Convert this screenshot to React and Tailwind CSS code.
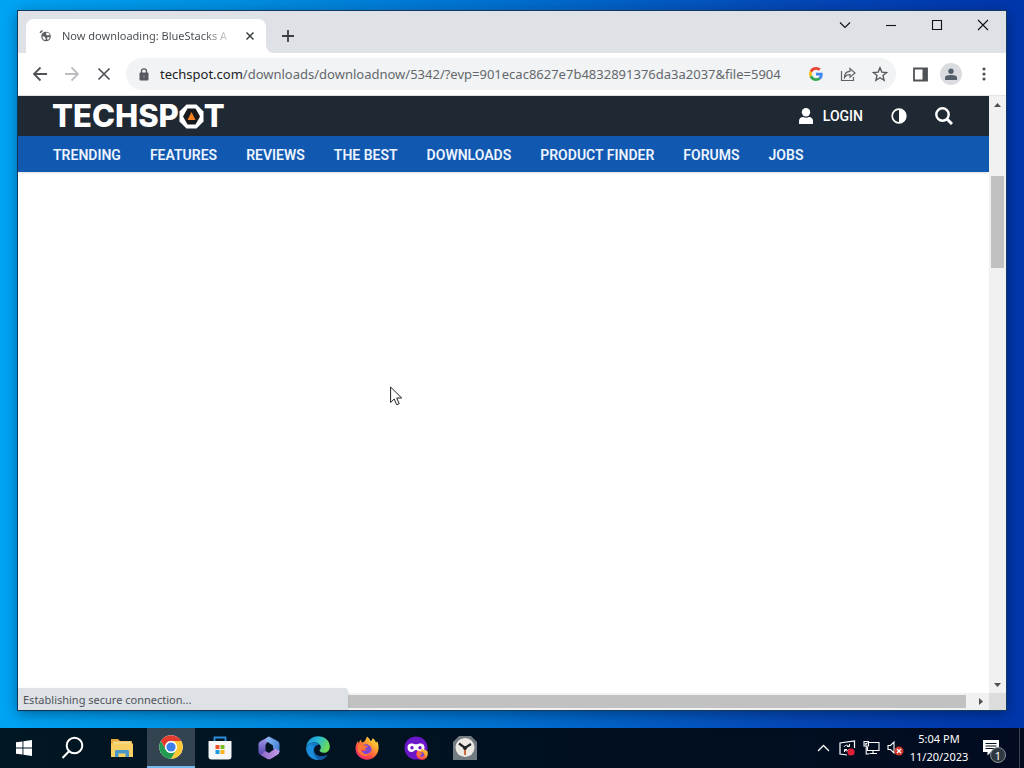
import React from 'react';

const navItems = ['TRENDING', 'FEATURES', 'REVIEWS', 'THE BEST', 'DOWNLOADS', 'PRODUCT FINDER', 'FORUMS', 'JOBS'];

/* ---------- Browser chrome ---------- */

function Favicon() {
  return (
    <svg className="h-4 w-4 shrink-0" viewBox="0 0 16 16" aria-hidden="true">
      <circle cx="8" cy="8.500" r="4.800" fill="#5b6064" />
      <path d="M4.500 8.500c1-.5 2 0 2.500 1s1 1 .5 2.500C5.500 12 4.200 10.500 4.500 8.500zM8 5c1.500-.5 3 .3 3.800 1.500L10 7.500 8.500 7zM9 9.500l2.500-.5c0 1.500-.8 2.500-2 3z" fill="#fff" />
      <path d="M2.200 5A3.500 3.500 0 0 1 4.500 2.700" fill="none" stroke="#5f6368" strokeWidth="1.500" />
    </svg>
  );
}

function WindowButtons() {
  const stroke = { fill: 'none', stroke: '#111', strokeWidth: 1.1 };
  return (
    <div className="flex h-7">
      <button aria-label="Search tabs" className="flex w-[46px] items-center justify-center">
        <svg width="12" height="12" viewBox="0 0 12 12"><path d="M1 3.500 6 8.500l5-5" {...stroke} /></svg>
      </button>
      <button aria-label="Minimize" className="flex w-[46px] items-center justify-center">
        <svg width="12" height="12" viewBox="0 0 12 12"><path d="M1 6.500h10" {...stroke} /></svg>
      </button>
      <button aria-label="Maximize" className="flex w-[46px] items-center justify-center">
        <svg width="12" height="12" viewBox="0 0 12 12"><path d="M1.500 1.500h9v9h-9z" {...stroke} /></svg>
      </button>
      <button aria-label="Close" className="flex w-[46px] items-center justify-center">
        <svg width="12" height="12" viewBox="0 0 12 12"><path d="m1 1 10 10M11 1 1 11" {...stroke} /></svg>
      </button>
    </div>
  );
}

function TabStrip() {
  return (
    <div className="flex h-[42px] shrink-0 justify-between bg-[#dee1e6]">
      <div className="flex items-end pl-2">
        <div className="flex h-[34px] w-60 items-center justify-between rounded-t-lg bg-white pr-2 pl-3">
          <Favicon />
          <span className="ml-2 flex-1 text-[11px] whitespace-nowrap">
            <span className="bg-gradient-to-r from-[#45494d] from-85% to-[#d5d6d8] bg-clip-text text-transparent">
              Now downloading: BlueStacks A
            </span>
          </span>
          <button aria-label="Close tab" className="flex h-4 w-4 items-center justify-center">
            <svg width="10" height="10" viewBox="0 0 10 10"><path d="m1.500 1.500 7 7m0-7-7 7" stroke="#3c4043" strokeWidth="1.500" /></svg>
          </button>
        </div>
        <svg className="h-2 w-2" viewBox="0 0 8 8" aria-hidden="true"><path d="M0 0v8h8a8 8 0 0 1-8-8" fill="#fff" /></svg>
        <button aria-label="New tab" className="flex h-[34px] w-7 items-center justify-center">
          <svg width="14" height="14" viewBox="0 0 14 14"><path d="M7 1v12M1 7h12" stroke="#3c4043" strokeWidth="1.800" /></svg>
        </button>
      </div>
      <WindowButtons />
    </div>
  );
}

function GoogleLogo() {
  return (
    <svg width="14" height="14" viewBox="0 0 48 48" aria-hidden="true">
      <path fill="#EA4335" d="M24 9.500c3.540 0 6.710 1.220 9.210 3.600l6.850-6.850C35.900 2.380 30.470 0 24 0 14.620 0 6.510 5.380 2.560 13.220l7.980 6.190C12.430 13.720 17.740 9.500 24 9.500z" />
      <path fill="#4285F4" d="M46.980 24.550c0-1.570-.15-3.090-.38-4.550H24v9.020h12.940c-.58 2.960-2.260 5.480-4.780 7.180l7.730 6c4.510-4.180 7.090-10.360 7.090-17.650z" />
      <path fill="#FBBC05" d="M10.530 28.590c-.48-1.450-.76-2.990-.76-4.590s.27-3.140.76-4.590l-7.980-6.190C.92 16.460 0 20.120 0 24s.92 7.540 2.560 10.780l7.970-6.190z" />
      <path fill="#34A853" d="M24 48c6.480 0 11.930-2.130 15.890-5.810l-7.730-6c-2.150 1.450-4.920 2.300-8.160 2.300-6.260 0-11.570-4.220-13.470-9.910l-7.980 6.190C6.510 42.620 14.620 48 24 48z" />
    </svg>
  );
}

function Toolbar() {
  return (
    <div className="flex h-[43px] shrink-0 items-center border-b border-[#e3e5e8] bg-white pr-1.5">
      <div className="flex w-[108px] pl-1.5">
        <button aria-label="Back" className="flex h-8 w-8 items-center justify-center">
          <svg width="16" height="16" viewBox="0 0 16 16"><path d="M15 8H2m6.500-6.500L2 8l6.500 6.500" fill="none" stroke="#4f5357" strokeWidth="1.800" /></svg>
        </button>
        <button aria-label="Forward" className="flex h-8 w-8 items-center justify-center">
          <svg width="16" height="16" viewBox="0 0 16 16"><path d="M1 8h13M7.500 1.500 14 8l-6.500 6.500" fill="none" stroke="#bcbec1" strokeWidth="1.800" /></svg>
        </button>
        <button aria-label="Stop loading" className="flex h-8 w-8 items-center justify-center">
          <svg width="14" height="14" viewBox="0 0 14 14"><path d="m1.500 1.500 11 11m0-11-11 11" stroke="#4f5357" strokeWidth="1.700" /></svg>
        </button>
      </div>

      <div className="flex h-8 min-w-0 flex-1 items-center rounded-full bg-[#f1f3f4] pl-3">
        <svg className="shrink-0" width="12" height="13" viewBox="0 0 12 13" aria-hidden="true">
          <rect x="1.500" y="4.500" width="9" height="8" rx="1" fill="#55595e" />
          <path d="M3.500 5V3.300a2.500 2.500 0 0 1 5 0V5" fill="none" stroke="#55595e" strokeWidth="1.300" />
          <circle cx="6" cy="8.500" r="1" fill="#85888c" />
        </svg>
        <div className="ml-2.5 min-w-0 flex-1 pt-0.5 text-[13px] whitespace-nowrap text-[#64686d]">
          <span className="text-[#202124]">techspot.com</span>/downloads/downloadnow/5342/?evp=901ecac8627e7b4832891376da3a2037&amp;file=5904
        </div>
        <button aria-label="Search with Google" className="flex h-8 w-8 shrink-0 items-center justify-center"><GoogleLogo /></button>
        <button aria-label="Share this page" className="flex h-8 w-8 shrink-0 items-center justify-center">
          <svg width="16" height="16" viewBox="0 0 16 16" fill="none" stroke="#5f6368" strokeWidth="1.200">
            <path d="M1.500 5v9.500h12V11" />
            <path d="M4.500 11.500c0-4 2-6 5.500-6.200V2.500l5 4.500-5 4.300V8.500c-2.500 0-4.200.8-5.500 3z" />
          </svg>
        </button>
        <button aria-label="Bookmark this tab" className="flex h-8 w-8 shrink-0 items-center justify-center">
          <svg width="16" height="16" viewBox="0 0 24 24" fill="none" stroke="#54585c" strokeWidth="2"><path d="m12 2.500 2.800 6.600 7.200.6-5.500 4.700 1.700 7-6.200-3.700-6.200 3.700 1.700-7L2 9.700l7.200-.6z" /></svg>
        </button>
      </div>

      <div className="flex items-center pl-1">
        <button aria-label="Side panel" className="flex h-8 w-8 items-center justify-center pl-2">
          <svg width="15" height="15" viewBox="0 0 15 15"><path d="M1 1.500h13v12H1z" fill="none" stroke="#4f5357" strokeWidth="1.800" /><path d="M9.500 1.500H14v12H9.500z" fill="#4f5357" /></svg>
        </button>
        <button aria-label="Profile" className="ml-2 flex h-[22px] w-[22px] items-center justify-center rounded-full bg-[#dadce0]">
          <svg width="12" height="12" viewBox="0 0 12 12" fill="#54606c"><circle cx="6" cy="3.200" r="2.700" /><path d="M0 12V9.500C0 7.700 3 7 6 7s6 .7 6 2.500V12z" /></svg>
        </button>
        <button aria-label="Menu" className="ml-1.5 flex h-8 w-8 items-center justify-center">
          <svg width="4" height="14" viewBox="0 0 4 14" fill="#4f5357"><circle cx="2" cy="2" r="1.600" /><circle cx="2" cy="7" r="1.600" /><circle cx="2" cy="12" r="1.600" /></svg>
        </button>
      </div>
    </div>
  );
}

/* ---------- Page ---------- */

function SiteHeader() {
  return (
    <header className="font-[Roboto,sans-serif] text-white shadow-sm">
      <div className="flex h-10 items-center justify-between bg-[#1f2933] pr-9 pl-[34px]">
        <a href="#" aria-label="TechSpot" className="flex items-center font-[Inter,sans-serif] text-[31px] leading-8 font-extrabold">
          TECHSP
          <svg className="h-[25px] w-[25px]" viewBox="0 0 25 25" aria-hidden="true">
            <path d="M7.500.5h10l7 7v10l-7 7h-10l-7-7v-10z" fill="#fff" />
            <path d="M8.500 4.500h8l4.500 8-4.500 8h-8l-4.500-8z" fill="#17191c" />
            <path d="m12.500 8 4 8h-8z" fill="#f58220" />
          </svg>
          T
        </a>
        <div className="flex items-center">
          <a href="#" className="flex items-center gap-2.5 text-sm font-medium">
            <svg width="14" height="16" viewBox="0 0 14 16" fill="#fff" aria-hidden="true"><circle cx="7" cy="4.200" r="4.200" /><path d="M0 16v-3c0-2.500 2-4 4-4 2 1 4 1 6 0 2 0 4 1.500 4 4v3z" /></svg>
            LOGIN
          </a>
          <button aria-label="Toggle dark mode" className="ml-7">
            <svg width="16" height="16" viewBox="0 0 16 16"><circle cx="8" cy="8" r="6.800" fill="none" stroke="#fff" strokeWidth="1.700" /><path d="M8 1a7 7 0 0 1 0 14z" fill="#fff" /></svg>
          </button>
          <button aria-label="Search" className="ml-7">
            <svg width="18" height="18" viewBox="0 0 18 18" fill="none" stroke="#fff"><circle cx="7.500" cy="7.500" r="6.200" strokeWidth="2.400" /><path d="m12 12 5 5" strokeWidth="3" /></svg>
          </button>
        </div>
      </div>
      <nav className="flex h-9 items-center gap-[29px] bg-[#1159b0] pt-0.5 pl-[35px] text-sm font-semibold whitespace-nowrap text-[#edf4ff]">
        {navItems.map((item) => (
          <a key={item} href="#">{item}</a>
        ))}
      </nav>
    </header>
  );
}

function VerticalScrollbar() {
  return (
    <div className="flex w-[17px] shrink-0 flex-col items-center bg-[#f1f1f1]">
      <button aria-label="Scroll up" className="flex h-[17px] w-full items-center justify-center">
        <svg width="7" height="4" viewBox="0 0 7 4"><path d="M0 4h7L3.500 0z" fill="#505050" /></svg>
      </button>
      <div className="mt-[63px] h-[92px] w-[13px] bg-[#c1c1c1]" />
      <button aria-label="Scroll down" className="mt-auto flex h-[17px] w-full items-center justify-center">
        <svg width="7" height="4" viewBox="0 0 7 4"><path d="M0 0h7L3.500 4z" fill="#505050" /></svg>
      </button>
    </div>
  );
}

function BrowserWindow() {
  return (
    <main className="relative flex min-w-0 flex-1 flex-col bg-white shadow-[0_0_0_1px_#123a60,0_3px_14px_rgba(0,0,0,0.4)]">
      <TabStrip />
      <Toolbar />
      <div className="flex flex-1">
        <div className="min-w-0 flex-1 bg-white">
          <SiteHeader />
        </div>
        <VerticalScrollbar />
      </div>
      <div className="flex h-[17px] shrink-0 items-center bg-[#f1f1f1]">
        <div className="ml-[17px] h-[13px] flex-1 bg-[#c1c1c1]" />
        <button aria-label="Scroll right" className="ml-[6px] flex h-[17px] w-[17px] items-center justify-center">
          <svg width="4" height="7" viewBox="0 0 4 7"><path d="M0 0v7l4-3.500z" fill="#505050" /></svg>
        </button>
        <div className="h-full w-[17px] bg-[#dcdcdc]" />
      </div>
      <div className="absolute bottom-0 left-0 flex h-[22px] w-[330px] items-center rounded-tr bg-[#dee1e6] pt-0.5 pl-[5px] text-[11px] text-[#50545a] shadow-sm">
        Establishing secure connection...
      </div>
    </main>
  );
}

/* ---------- Taskbar ---------- */

function StartIcon() {
  return (
    <svg width="16" height="16" viewBox="0 0 16 16" fill="#fff">
      <path d="M0 2.300 6.500 1.400v6.200H0zM7.400 1.200 16 0v7.600H7.400zM0 8.400h6.500v6.200L0 13.700zM7.400 8.400H16V16l-8.600-1.200z" />
    </svg>
  );
}

function SearchIcon() {
  return (
    <svg width="24" height="24" viewBox="0 0 24 24" fill="none" stroke="#fff" strokeWidth="2">
      <circle cx="13.500" cy="9.500" r="7.800" />
      <path d="M8 15.200 1.500 22" />
    </svg>
  );
}

function FolderIcon() {
  return (
    <svg width="24" height="24" viewBox="0 0 24 24">
      <path d="M1 3h7l2 2h12v4H1z" fill="#e5a93a" />
      <path d="M3 5.500h18V9H3z" fill="#f6dc91" />
      <path d="M1 7.500h22V21H1z" fill="#f8cf63" />
      <path d="M5 21v-5.500c0-1 .8-1.500 1.500-1.500h11c.8 0 1.500.6 1.500 1.500V21h-3.500v-3.500h-7V21z" fill="#4a95ca" />
    </svg>
  );
}

function ChromeIcon() {
  return (
    <svg width="24" height="24" viewBox="0 0 24 24">
      <circle cx="12" cy="12" r="11.800" fill="#fff" />
      <path d="M1.800 6.100A11.800 11.800 0 0 1 22.200 6.100H12a5.900 5.900 0 0 0-5.110 8.850z" fill="#e33b2e" />
      <path d="M22.200 6.100A11.800 11.800 0 0 1 12 23.800l5.110-8.850A5.900 5.900 0 0 0 12 6.100z" fill="#fcc934" />
      <path d="M12 23.800A11.800 11.800 0 0 1 1.800 6.100l5.090 8.850A5.900 5.900 0 0 0 17.110 14.950z" fill="#229a50" />
      <circle cx="12" cy="12" r="5.900" fill="#fff" />
      <circle cx="12" cy="12" r="4.600" fill="#3c7fe8" />
    </svg>
  );
}

function StoreIcon() {
  return (
    <svg width="24" height="24" viewBox="0 0 24 24">
      <path d="M6.500 5V1.500h11V5" fill="none" stroke="#2f8ddd" strokeWidth="1.800" />
      <path d="M.5 5h23v15.500a3 3 0 0 1-3 3h-17a3 3 0 0 1-3-3z" fill="#f5f6f7" />
      <path d="M7.500 9h4v4h-4z" fill="#f0522a" />
      <path d="M12.500 9h4v4h-4z" fill="#7eb928" />
      <path d="M7.500 14h4v4h-4z" fill="#1f9bdd" />
      <path d="M12.500 14h4v4h-4z" fill="#f7b51c" />
    </svg>
  );
}

function OfficeIcon() {
  return (
    <svg width="24" height="24" viewBox="0 0 24 24">
      <defs>
        <linearGradient id="officeA" x1="0" y1="0" x2="0" y2="1"><stop stopColor="#a9a1ee" /><stop offset="1" stopColor="#5745af" /></linearGradient>
        <linearGradient id="officeB" x1="0" y1="0" x2="1" y2="0.500"><stop stopColor="#8fc0f5" /><stop offset="1" stopColor="#4b85d6" /></linearGradient>
        <linearGradient id="officeC" x1="0" y1="0" x2="1" y2="0"><stop stopColor="#8a67c9" /><stop offset="1" stopColor="#c79ae6" /></linearGradient>
      </defs>
      <path d="M12 .5 3.500 5.200C2 6 1.500 7 1.500 8.500v7.500c0 1.500.8 2.500 2 3L8.500 16V9.500c0-1 .5-2 1.500-2.500z" fill="url(#officeA)" />
      <path d="M12 .5 20.500 5c1.500 1 2 2 2 3.500V16L16 12.500V9.500L9 5c0-2 1-3.500 3-4.500z" fill="url(#officeB)" />
      <path d="M3.500 19 10 22.700c1.300.8 2.700.8 4 0l6.500-4c1.500-1 2-2.200 2-3.700L18 12.500 12 17l-3.500-2z" fill="url(#officeC)" />
    </svg>
  );
}

function EdgeIcon() {
  return (
    <svg width="24" height="24" viewBox="0 0 24 24">
      <defs>
        <linearGradient id="edgeTop" x1="0" y1="0" x2="1" y2="0.400"><stop stopColor="#168cd9" /><stop offset="0.500" stopColor="#27b8d5" /><stop offset="1" stopColor="#6bdc58" /></linearGradient>
        <linearGradient id="edgeLow" x1="0" y1="0" x2="1" y2="1"><stop stopColor="#1689d8" /><stop offset="1" stopColor="#104b91" /></linearGradient>
      </defs>
      <path d="M.3 12C.3 5 5.500.2 12 .2 19 .2 23.800 5 23.800 10.500c0 4-2.600 6.300-6 6.300-2.500 0-4.300-1.100-4.300-2.300 0-.8 1.300-1 1.300-2.800C14.800 8.500 12 6.500 8 6.500 4 6.500.8 8.800.3 12z" fill="url(#edgeTop)" />
      <path d="M.3 12C.8 8.800 4 6.500 8 6.500c2.500 0 4.500.8 5.800 2C10.500 8.500 8 11 8 14c0 5 5.500 7.800 12.500 5.200.7-.2 1 .3.600.8A11.800 11.800 0 0 1 .3 12z" fill="url(#edgeLow)" />
      <path d="M8 10.500C6 14 7 20 12.500 23.700 6 24 .3 19 .3 12 1.500 8.500 6 8 8 10.500z" fill="#1c8ddb" />
    </svg>
  );
}

function FirefoxIcon({ size = 24, id = 'fox' }) {
  return (
    <svg width={size} height={size} viewBox="0 0 24 24">
      <defs>
        <linearGradient id={id} x1="1" y1="0" x2="0.200" y2="1"><stop stopColor="#fff04a" /><stop offset="0.350" stopColor="#ffab30" /><stop offset="0.700" stopColor="#ff4b42" /><stop offset="1" stopColor="#f0287b" /></linearGradient>
      </defs>
      <path d="M12 .5c2 1.500 3 3 3.500 4.500 1.500-.5 2-1.500 2-3 3 2 3 4 3.500 4.500.8-.3 1-1 1-1.500 1.200 2 1.800 4.700 1.500 8C23 19 18 23.700 12 23.700S.5 19 .5 12.500c0-3 1-5.500 2.500-7.500 0 1 .2 1.500.6 2C4.500 5.500 5 4.500 6 3.800c0 1.200.5 2.200 1.500 2.700C10 6 10.500 3.500 12 .5z" fill={`url(#${id})`} />
      <path d="M8 9c3-2 8.500 0 8.500 4.500 0 3-2.500 5-5 5s-5-2-5-4.500c1.500 1.300 3.500 1.200 5-.5-2-.3-3.500-1-5-2.500.3-.8.800-1.500 1.500-2z" fill="#8048cf" />
      <path d="M3 9c2-2 5-1 7 .5l3 1-3 2c-1 1.300-3 1.300-4 .5 0 3 3 5.500 6 5 2-.3 3.500-1.500 4-3 .5 5-8 7-12 2C2.500 15 2 12 3 9z" fill="#ff7735" />
    </svg>
  );
}

function PrivateBrowsingIcon() {
  return (
    <div className="relative h-6 w-6">
      <svg width="24" height="24" viewBox="0 0 24 24">
        <circle cx="12" cy="12" r="11.500" fill="#6a16c9" />
        <path d="M3.500 11.500C3.500 9 5 7.500 7.500 7.500c2 0 3.200.8 4.500.8s2.500-.8 4.500-.8c2.500 0 4 1.500 4 4s-1.500 4.500-4 4.500c-2.300 0-3-2-4.500-2s-2.200 2-4.500 2c-2.500 0-4-2-4-4.500z" fill="#fff" />
        <circle cx="8" cy="11.700" r="1.700" fill="#6a16c9" />
        <circle cx="16" cy="11.700" r="1.700" fill="#6a16c9" />
      </svg>
      <span className="absolute right-0 bottom-0"><FirefoxIcon size={12} id="foxSmall" /></span>
    </div>
  );
}

function ClockIcon() {
  return (
    <svg width="24" height="24" viewBox="0 0 24 24">
      <path d="M0 24V6l6-6h12l6 6v18z" fill="#747c83" />
      <circle cx="12" cy="11.500" r="9.500" fill="#ece9e3" />
      <path d="M12 12v7" stroke="#d06b40" strokeWidth="2" />
      <path d="M6 7.500 12 12l6-4" fill="none" stroke="#202224" strokeWidth="2.200" />
      <circle cx="12" cy="12" r="2" fill="#202224" />
    </svg>
  );
}

const apps = [
  { name: 'Start', Icon: StartIcon },
  { name: 'Search', Icon: SearchIcon },
  { name: 'File Explorer', Icon: FolderIcon },
  { name: 'Google Chrome', Icon: ChromeIcon, active: true },
  { name: 'Microsoft Store', Icon: StoreIcon },
  { name: 'Microsoft 365', Icon: OfficeIcon },
  { name: 'Microsoft Edge', Icon: EdgeIcon },
  { name: 'Firefox', Icon: FirefoxIcon },
  { name: 'Private Browsing', Icon: PrivateBrowsingIcon },
  { name: 'Clock', Icon: ClockIcon },
];

function Tray() {
  return (
    <div className="flex items-center text-white">
      <button aria-label="Show hidden icons" className="flex w-6 justify-center">
        <svg width="13" height="8" viewBox="0 0 13 8"><path d="m1 7 5.500-5.500L12 7" fill="none" stroke="#fff" strokeWidth="1.300" /></svg>
      </button>
      <button aria-label="Updates" className="flex w-6 justify-center">
        <svg width="17" height="16" viewBox="0 0 17 16" fill="none" stroke="#fff" strokeWidth="1.200">
          <path d="M15.500 8V1L1 3v11l7 1" />
          <path d="M5 7c.8-2 4-2.500 5-.5M10.500 4v2.500H8M5.500 12V9.500H8M9.500 9.500c-.5 1.500-2.500 2-3.800.5" strokeWidth="1" />
          <circle cx="12" cy="12" r="3.600" fill="#e01e37" stroke="none" />
        </svg>
      </button>
      <button aria-label="Network" className="flex w-6 justify-center">
        <svg width="17" height="16" viewBox="0 0 17 16" fill="none" stroke="#fff" strokeWidth="1.100">
          <path d="M5.500 2.500H16v8H4.500V7M10 10.500v3M6.500 13.500H14M1 1.500h4.500V6H1zM3.200 6v8H6M2 3.500l1 1 1.500-2" />
        </svg>
      </button>
      <button aria-label="Volume muted" className="flex w-6 justify-center">
        <svg width="17" height="16" viewBox="0 0 17 16" fill="none" stroke="#fff">
          <path d="M1 5.500h2.500L7 2v11L3.500 9.500H1z" strokeWidth="1.100" />
          <circle cx="12" cy="11" r="4.500" fill="#d3352b" stroke="none" />
          <path d="m10 9 4 4m0-4-4 4" strokeWidth="1.300" />
        </svg>
      </button>
      <button className="w-16 text-center text-[11px] leading-[18px] whitespace-nowrap">
        5:04 PM<br />11/20/2023
      </button>
      <button aria-label="Notifications" className="relative flex h-10 w-12 items-center pl-3">
        <svg width="16" height="16" viewBox="0 0 16 16"><path d="M0 0h16v12H8l-3.500 3.500V12H0z" fill="#fff" /><path d="M2.500 3.500h11M2.500 6h11M2.500 8.500h11" stroke="#081320" /></svg>
        <span className="absolute top-[19px] left-[19px] flex h-4 w-4 items-center justify-center rounded-full border border-[#8a9299] bg-[#303941] text-[11px] leading-none">1</span>
      </button>
      <span className="mr-1 h-10 w-px bg-[#3b4450]" />
    </div>
  );
}

function Taskbar() {
  return (
    <footer className="flex h-10 shrink-0 justify-between bg-gradient-to-r from-[#011722] to-[#020b20]">
      <div className="flex gap-px">
        {apps.map(({ name, Icon, active }) => (
          <button
            key={name}
            aria-label={name}
            className={active ? 'flex w-12 items-center justify-center border-b-2 border-[#76b9ed] bg-[#334450]' : 'flex w-12 items-center justify-center'}
          >
            <Icon />
          </button>
        ))}
      </div>
      <Tray />
    </footer>
  );
}

export default function App() {
  return (
    <div className="relative flex h-screen flex-col overflow-hidden bg-[linear-gradient(90deg,#00a4f5_0%,#0092e4_20%,#0072d2_48%,#0547b8_78%,#0036ac_100%)] font-['Noto_Sans','Open_Sans',sans-serif]">
      <div className="flex flex-1 px-[18px] pt-[11px] pb-[18px]">
        <BrowserWindow />
      </div>
      <Taskbar />
      <svg className="absolute top-[386px] left-[390px]" width="13" height="20" viewBox="0 0 13 20" aria-hidden="true">
        <path d="M.6 1v15.500L4.200 13l2.500 5.700 2.500-1-2.500-5.700h5z" fill="#fff" stroke="#222" />
      </svg>
    </div>
  );
}
